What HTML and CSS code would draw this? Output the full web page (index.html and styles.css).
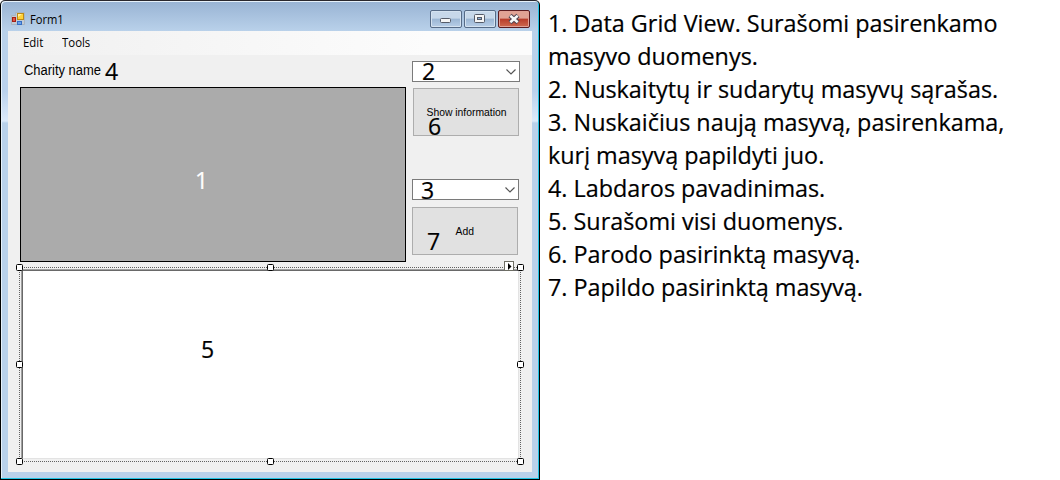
FILE: index.html
```html
<!DOCTYPE html>
<html lang="lt">
<head>
<meta charset="utf-8">
<title>Form1</title>
<link rel="stylesheet" href="styles.css">
</head>
<body>
<main class="page">
  <section class="window">
    <header class="titlebar">
      <svg class="app-icon" width="14" height="14" viewBox="0 0 14 14">
        <path d="M.5 3.500h4V.5h9v12h-13z" fill="#c3cbd4" stroke="#a8b4c1"/>
        <rect x="6.500" y="1.500" width="6" height="6" fill="#ffd238" stroke="#bd8b16"/>
        <path d="M7 2h4L7 5z" fill="#fff0a0"/>
        <rect x="1.500" y="5.500" width="3" height="4" fill="#e25442" stroke="#a51f16"/>
        <rect x="6.500" y="9.500" width="4" height="3" fill="#6ba2ec" stroke="#356ec4"/>
      </svg>
      <span class="title">Form1</span>
      <div class="controls">
        <span class="ctl"><svg width="30" height="16"><rect x="9.500" y="7.500" width="10" height="4" rx="1" fill="#f5f5f5" stroke="#555b68"/></svg></span>
        <span class="ctl"><svg width="30" height="16"><rect x="9.500" y="3.500" width="10" height="8" rx="1" fill="#f5f5f5" stroke="#555b68"/><rect x="12.500" y="6.500" width="4" height="2" fill="#8fb1d8" stroke="#555b68"/></svg></span>
        <span class="ctl close"><svg width="30" height="16"><path d="M11 4.500l8 7M19 4.500l-8 7" stroke="#4f4450" stroke-width="4.600"/><path d="M11.300 4.800l7.400 6.400M18.700 4.800l-7.400 6.400" stroke="#f8f8f8" stroke-width="2.500"/></svg></span>
      </div>
    </header>
    <div class="client">
      <nav class="menu"><span class="edit">Edit</span><span class="tools">Tools</span></nav>
      <div class="upper">
        <div class="left">
          <div class="label"><span>Charity name</span></div>
          <div class="grid"></div>
        </div>
        <div class="right">
          <div class="combo first"><svg width="10" height="6"><path d="M.5.5L5 5 9.500.5" fill="none" stroke="#555" stroke-width="1.200"/></svg></div>
          <div class="button show"><span>Show information</span></div>
          <div class="combo second"><svg width="10" height="6"><path d="M.5.5L5 5 9.500.5" fill="none" stroke="#555" stroke-width="1.200"/></svg></div>
          <div class="button add"><span>Add</span></div>
        </div>
      </div>
      <div class="textbox"></div>
    </div>
    <svg class="selection" width="508" height="205" viewBox="0 0 508 205">
      <g fill="none" stroke="#626262" stroke-dasharray="1 1">
        <path d="M4 6.500h501M4 200.500h501M3.500 7v194M504.500 7v194"/>
      </g>
      <rect x="488.500" y=".5" width="9" height="9" fill="#fff" stroke="#6e6e64"/>
      <path d="M492 2l3.500 3.500-3.500 3.500z"/>
      <g fill="#fff" stroke="#000">
        <rect x=".5" y="3.500" width="6" height="6" rx="1"/><rect x="251.500" y="3.500" width="6" height="6" rx="1"/><rect x="501.500" y="3.500" width="6" height="6" rx="1"/>
        <rect x=".5" y="100.500" width="6" height="6" rx="1"/><rect x="501.500" y="100.500" width="6" height="6" rx="1"/>
        <rect x=".5" y="197.500" width="6" height="6" rx="1"/><rect x="251.500" y="197.500" width="6" height="6" rx="1"/><rect x="501.500" y="197.500" width="6" height="6" rx="1"/>
      </g>
    </svg>
    <span class="mark m1">1</span>
    <span class="mark m2">2</span>
    <span class="mark m3">3</span>
    <span class="mark m4">4</span>
    <span class="mark m5">5</span>
    <span class="mark m6">6</span>
    <span class="mark m7">7</span>
  </section>
  <section class="notes">
    <p><span>1. Data Grid View. Surašomi pasirenkamo</span></p>
    <p><span>masyvo duomenys.</span></p>
    <p><span>2. Nuskaitytų ir sudarytų masyvų sąrašas.</span></p>
    <p><span>3. Nuskaičius naują masyvą, pasirenkama,</span></p>
    <p><span>kurį masyvą papildyti juo.</span></p>
    <p><span>4. Labdaros pavadinimas.</span></p>
    <p><span>5. Surašomi visi duomenys.</span></p>
    <p><span>6. Parodo pasirinktą masyvą.</span></p>
    <p><span>7. Papildo pasirinktą masyvą.</span></p>
  </section>
</main>
</body>
</html>
```
FILE: styles.css
```css
* { box-sizing: border-box; }
body { margin: 0; background: #fff; color: #000; font-family: "Open Sans", "Noto Sans", sans-serif; }
.page { display: flex; width: 1060px; height: 480px; overflow: hidden; }
.window {
  position: relative; flex: none; width: 540px; height: 480px; padding: 2px 6px 6px 7px;
  border: 1px solid #000; border-top-color: #29272d;
  border-radius: 5px 5px 0 0;
  background: linear-gradient(#98b3d3, #b9d1ea 30px, #bad1ec 90px, #dceafa 120px, #b9d1ea 122px);
  box-shadow: inset -1px -1px 0 #20c3e3, inset 1px 1px 0 #e6f1fa;
}
.titlebar { display: flex; height: 28px; padding: 9px 3px 0 3px; align-items: flex-start; }
.app-icon { flex: none; display: block; }
.title { margin-left: 5px; font-size: 12px; line-height: 16px; transform: scaleX(.93); transform-origin: left; }
.controls { display: flex; gap: 2px; margin: -2px 0 0 auto; }
.ctl { width: 32px; height: 18px; border: 1px solid #566b87; border-radius: 2px; background: linear-gradient(#c7d8ea 0 45%, #9bb6d4 50%, #b8cee7); box-shadow: inset 0 0 0 1px #d4e2f0; }
.ctl svg { display: block; }
.close { border-color: #5b1c20; background: linear-gradient(#e1a294 0 45%, #b83c2a 50%, #ce6a50); box-shadow: inset 0 0 0 1px #e0a196; }
.client { width: 524px; height: 441px; background: #f0f0f0; }
.menu { display: flex; height: 24px; background: linear-gradient(90deg, #f0f0f0, #fcfcfc 420px); font-size: 12px; line-height: 24px; }
.menu span { transform-origin: left; transform: scaleX(.95); }
.edit { width: 39px; margin-left: 15px; }
.upper { display: flex; height: 207px; padding-left: 12px; }
.left { width: 386px; }
.label { height: 32px; padding: 6px 0 0 4px; font: 14px/18px "Liberation Sans", Arial, sans-serif; }
.label span { display: inline-block; white-space: nowrap; transform: scaleX(.925); transform-origin: left; }
.grid { height: 175px; border: 1px solid #000; background: #ababab; }
.right { width: 108px; margin-left: 6px; padding-top: 6px; }
.combo { display: flex; align-items: center; justify-content: flex-end; width: 108px; height: 21px; padding-right: 3px; border: 1px solid #7a7a7a; background: #fff; }
.button { display: flex; align-items: center; justify-content: center; width: 106px; height: 48px; border: 1px solid #adadad; background: #e1e1e1; font: 11px/14px "Liberation Sans", Arial, sans-serif; }
.button span { white-space: nowrap; transform: scaleX(.94); }
.show { margin: 6px 0 0 1px; }
.second { width: 107px; margin-top: 43px; }
.add { margin-top: 7px; }
.textbox { width: 498px; height: 190px; margin: 7px 0 0 13px; border: 1px solid; border-color: #a0a0a0 #e3e3e3 #e3e3e3 #a0a0a0; background: #fff; box-shadow: inset 1px 1px 0 #696969; }
.selection { position: absolute; left: 15px; top: 260px; }
.mark { position: absolute; font-size: 23.500px; line-height: 32px; transform: scaleX(.98); transform-origin: left; -webkit-text-stroke: .2px; }
.m1 { left: 194px; top: 163px; color: #fff; }
.m2 { left: 421px; top: 54px; }
.m3 { left: 420px; top: 173px; }
.m4 { left: 104px; top: 54px; }
.m5 { left: 200px; top: 332px; }
.m6 { left: 427px; top: 109px; }
.m7 { left: 426px; top: 224px; }
.notes { padding: 7px 0 0 8px; font-size: 23.700px; line-height: 33px; white-space: nowrap; -webkit-text-stroke: .2px; }
.notes p { margin: 0; height: 33px; }
.notes span { display: inline-block; transform: scaleX(.986); transform-origin: left; }
```
